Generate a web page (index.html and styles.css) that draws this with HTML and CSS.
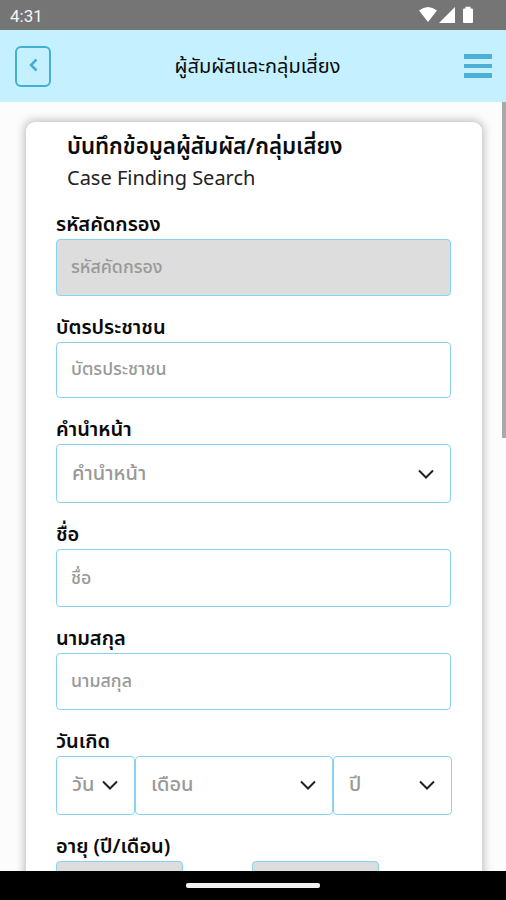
FILE: index.html
```html
<!DOCTYPE html>
<html lang="th">
<head>
<meta charset="utf-8">
<title>ผู้สัมผัสและกลุ่มเสี่ยง</title>
<link rel="stylesheet" href="styles.css">
</head>
<body>
<div class="status">
  <span class="time">4:31</span>
  <svg class="status-icons" width="56" height="18" viewBox="0 0 56 18"><path d="M0 4.500Q9 -2.500 18 4.500L9 16Z"/><path d="M36 1V17H20Z"/><path d="M45 2.500H46.500V.8H51.500V2.500H53Q54 2.500 54 3.500V16Q54 17 53 17H45Q44 17 44 16V3.500Q44 2.500 45 2.500Z"/></svg>
</div>
<header class="header">
  <button class="back" aria-label="ย้อนกลับ"><svg width="10" height="14" viewBox="0 0 10 14"><path d="M8.500 1.500 3 7 8.500 12.500"/></svg></button>
  <h1 class="title"><span>ผู้สัมผัสและกลุ่มเสี่ยง</span></h1>
  <div class="menu"><i></i><i></i><i></i></div>
</header>
<main class="content">
  <section class="card">
    <h2 class="heading"><span>บันทึกข้อมูลผู้สัมผัส/กลุ่มเสี่ยง</span></h2>
    <p class="sub"><span>Case Finding Search</span></p>
    <label class="label"><span>รหัสคัดกรอง</span></label>
    <div class="field disabled"><span>รหัสคัดกรอง</span></div>
    <label class="label"><span>บัตรประชาชน</span></label>
    <div class="field"><span>บัตรประชาชน</span></div>
    <label class="label"><span>คำนำหน้า</span></label>
    <div class="field select"><span>คำนำหน้า</span><svg class="chevron" width="16" height="10" viewBox="0 0 16 10"><path d="M1 1.500 8 8.500 15 1.500"/></svg></div>
    <label class="label"><span>ชื่อ</span></label>
    <div class="field name"><span>ชื่อ</span></div>
    <label class="label"><span>นามสกุล</span></label>
    <div class="field"><span>นามสกุล</span></div>
    <label class="label"><span>วันเกิด</span></label>
    <div class="birth">
      <div class="field select day"><span>วัน</span><svg class="chevron" width="16" height="10" viewBox="0 0 16 10"><path d="M1 1.500 8 8.500 15 1.500"/></svg></div>
      <div class="field select month"><span>เดือน</span><svg class="chevron" width="16" height="10" viewBox="0 0 16 10"><path d="M1 1.500 8 8.500 15 1.500"/></svg></div>
      <div class="field select year"><span>ปี</span><svg class="chevron" width="16" height="10" viewBox="0 0 16 10"><path d="M1 1.500 8 8.500 15 1.500"/></svg></div>
    </div>
    <label class="label"><span>อายุ (ปี/เดือน)</span></label>
    <div class="age"><div class="field disabled"></div><div class="field disabled"></div></div>
  </section>
  <div class="scrollbar"></div>
</main>
<footer class="navbar"><div class="handle"></div></footer>
</body>
</html>
```
FILE: styles.css
```css
* { box-sizing: border-box; }
body {
  margin: 0;
  width: 506px;
  height: 900px;
  overflow: hidden;
  display: flex;
  flex-direction: column;
  font-family: "Noto Sans", "Noto Sans Thai", sans-serif;
  color: #0b0b0b;
}
.status {
  height: 30px;
  flex: none;
  background: #757575;
  display: flex;
  align-items: center;
  justify-content: space-between;
  padding: 0 31px 0 10px;
}
.time { color: #f4f4f4; font: 400 17px/30px Roboto, sans-serif; padding-top: 2px; }
.status-icons { fill: #fff; }
.header {
  height: 72px;
  flex: none;
  background: #c5f0ff;
  display: flex;
  align-items: center;
  justify-content: space-between;
  padding: 0 14px 0 15px;
}
.back {
  width: 36px;
  height: 41px;
  padding: 0 0 2px;
  border: 2px solid #42afd5;
  border-radius: 6px;
  background: none;
  display: flex;
  align-items: center;
  justify-content: center;
}
.back path { fill: none; stroke: #42afd5; stroke-width: 2.500; }
.title { margin: 0; padding-top: 1px; font-size: 20px; font-weight: 400; white-space: nowrap; }
.menu { width: 28px; display: flex; flex-direction: column; gap: 5px; }
.menu i { height: 4.500px; background: #4db1d7; }
.content {
  flex: 1;
  min-height: 0;
  overflow: hidden;
  background: #fcfcfc;
  display: flex;
  justify-content: space-between;
  align-items: flex-start;
}
.card {
  width: 456px;
  height: 900px;
  margin: 20px 0 0 26px;
  padding: 7px 31px 0 30px;
  background: #fff;
  border-radius: 9px;
  box-shadow: 0 0 9px 2px rgba(0, 0, 0, .24);
}
.heading { margin: 0 0 0 11px; font-size: 22.300px; line-height: 34px; height: 34px; font-weight: 600; white-space: nowrap; }
.sub { margin: 0 0 0 11px; padding-top: 1px; font-size: 20px; line-height: 27px; height: 30px; white-space: nowrap; color: #222; }
.label { display: block; height: 46px; padding-top: 16px; font-size: 20px; line-height: 30px; font-weight: 600; white-space: nowrap; }
.field {
  height: 56.500px;
  border: 1.500px solid #87d3f0;
  border-radius: 4px;
  background: #fff;
  padding: 0 15px 0 14px;
  display: flex;
  align-items: center;
  justify-content: space-between;
  font-size: 17.800px;
  font-weight: 500;
  color: #999;
  white-space: nowrap;
}
.disabled { background: #ddd; }
.name { height: 58px; }
.select { height: 59px; padding: 0 16px 0 15px; font-size: 20px; }
.chevron { fill: none; stroke: #222; stroke-width: 2; }
.birth { display: flex; width: 396px; }
.day { width: 79px; }
.month { width: 198px; }
.year { width: 119px; }
.age { display: flex; gap: 69px; }
.age .field { width: 127px; }
.scrollbar { width: 4px; height: 336px; background: #a9a9a9; }
.navbar { height: 29px; flex: none; background: #000; display: flex; justify-content: center; align-items: center; }
.handle { width: 134px; height: 5px; border-radius: 2px; background: #f0f0f0; }
```
